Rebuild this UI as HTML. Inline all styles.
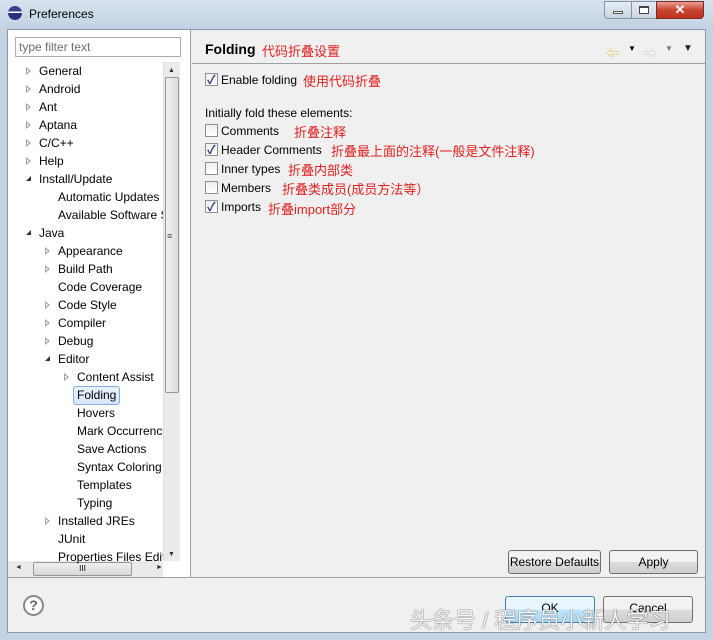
<!DOCTYPE html>
<html><head><meta charset="utf-8"><style>
*{margin:0;padding:0;box-sizing:border-box}
body{width:713px;height:640px;overflow:hidden;background:#c4d3e3;font-family:"Liberation Sans","Noto Sans CJK SC",sans-serif;font-size:12px;color:#000;position:relative}
.a{position:absolute;white-space:nowrap}
.red{color:#e02020;font-size:13px}
.cb{position:absolute;width:13px;height:13px;border:1px solid #8e8f8f;background:linear-gradient(#eee,#fff)}
.cb.c::after{content:"✓";position:absolute;left:1px;top:-3px;font-size:12px;color:#2a3d78;font-weight:bold}
.tri{position:absolute;width:0;height:0;border-top:4px solid transparent;border-bottom:4px solid transparent;border-left:5px solid #a0a0a0}
.tri::after{content:"";position:absolute;left:-4px;top:-2px;border-top:2px solid transparent;border-bottom:2px solid transparent;border-left:2.5px solid #fff}
.open{position:absolute;width:0;height:0;border-left:5px solid transparent;border-bottom:5px solid #333}
.btn{position:absolute;border:1px solid #707070;border-radius:3px;background:linear-gradient(#f2f2f2 50%,#dcdcdc 50%,#cfcfcf);text-align:center;font-size:12px}
</style></head><body>
<div class="a" style="left:0;top:0;width:713px;height:30px;background:linear-gradient(#d7e2ee,#c2d2e3)"></div>
<div class="a" style="left:8px;top:6px;width:14px;height:14px;border-radius:50%;background:linear-gradient(#3c3f8c 0 40%,#fff 40% 50%,#2c2f7a 50%)"></div>
<div class="a" style="left:29px;top:7px;font-size:12px">Preferences</div>
<div class="a" style="left:604px;top:1px;width:28px;height:18px;border:1px solid #8393a6;border-radius:0 0 0 4px;background:linear-gradient(#e6edf5,#c9d5e2)"><div class="a" style="left:8px;top:9px;width:10px;height:3px;border:1px solid #555;background:#fff"></div></div>
<div class="a" style="left:631px;top:1px;width:26px;height:18px;border:1px solid #8393a6;background:linear-gradient(#e6edf5,#c9d5e2)"><div class="a" style="left:7px;top:4px;width:10px;height:8px;border:1px solid #444;border-top-width:2px;background:#fff"></div></div>
<div class="a" style="left:656px;top:1px;width:48px;height:18px;border:1px solid #7a2a20;border-radius:0 0 4px 0;background:linear-gradient(#e8a090,#c94532 50%,#c0311c);color:#fff;text-align:center;font-weight:bold;font-size:13px;line-height:16px">✕</div>
<div class="a" style="left:7px;top:29px;width:699px;height:604px;background:#f0f0f0;border:1px solid #8a9aab"></div>
<div class="a" style="left:8px;top:30px;width:183px;height:548px;background:#fff;border-right:1px solid #a0a0a0"></div>
<div class="a" style="left:15px;top:37px;width:166px;height:20px;border:1px solid #a5acb5;background:#fff;color:#6d6d6d;padding:2px 3px">type filter text</div>
<div class="a" style="left:192px;top:63px;width:513px;height:1px;background:#a0a0a0"></div>
<div class="a" style="left:8px;top:577px;width:697px;height:1px;background:#a0a0a0"></div>
<div class="a" style="left:163px;top:62px;width:17px;height:499px;background:#eaeaea;border-left:1px solid #e0e0e0"></div>
<div class="a" style="left:168px;top:67px;font-size:7px;color:#333">▲</div>
<div class="a" style="left:168px;top:551px;font-size:7px;color:#333">▼</div>
<div class="a" style="left:165px;top:77px;width:14px;height:316px;border:1px solid #969696;border-radius:2px;background:linear-gradient(90deg,#f0f0f0,#dcdcdc)"></div>
<div class="a" style="left:167px;top:231px;font-size:9px;color:#444">≡</div>
<div class="a" style="left:8px;top:561px;width:155px;height:16px;background:#eaeaea"></div>
<div class="a" style="left:15px;top:564px;font-size:7px;color:#333">◄</div>
<div class="a" style="left:156px;top:564px;font-size:7px;color:#333">►</div>
<div class="a" style="left:33px;top:562px;width:99px;height:14px;border:1px solid #969696;border-radius:2px;background:linear-gradient(#f0f0f0,#d8d8d8);text-align:center;font-size:8px;line-height:12px">III</div>
<div class="tri" style="left:26px;top:67px"></div><div class="a" style="left:39px;top:64px">General</div>
<div class="tri" style="left:26px;top:85px"></div><div class="a" style="left:39px;top:82px">Android</div>
<div class="tri" style="left:26px;top:103px"></div><div class="a" style="left:39px;top:100px">Ant</div>
<div class="tri" style="left:26px;top:121px"></div><div class="a" style="left:39px;top:118px">Aptana</div>
<div class="tri" style="left:26px;top:139px"></div><div class="a" style="left:39px;top:136px">C/C++</div>
<div class="tri" style="left:26px;top:157px"></div><div class="a" style="left:39px;top:154px">Help</div>
<div class="open" style="left:26px;top:176px"></div><div class="a" style="left:39px;top:172px">Install/Update</div>
<div class="a" style="left:58px;top:190px">Automatic Updates</div>
<div class="a" style="left:58px;top:208px;width:105px;overflow:hidden">Available Software Sites</div>
<div class="open" style="left:26px;top:230px"></div><div class="a" style="left:39px;top:226px">Java</div>
<div class="tri" style="left:45px;top:247px"></div><div class="a" style="left:58px;top:244px">Appearance</div>
<div class="tri" style="left:45px;top:265px"></div><div class="a" style="left:58px;top:262px">Build Path</div>
<div class="a" style="left:58px;top:280px">Code Coverage</div>
<div class="tri" style="left:45px;top:301px"></div><div class="a" style="left:58px;top:298px">Code Style</div>
<div class="tri" style="left:45px;top:319px"></div><div class="a" style="left:58px;top:316px">Compiler</div>
<div class="tri" style="left:45px;top:337px"></div><div class="a" style="left:58px;top:334px">Debug</div>
<div class="open" style="left:45px;top:356px"></div><div class="a" style="left:58px;top:352px">Editor</div>
<div class="tri" style="left:64px;top:373px"></div><div class="a" style="left:77px;top:370px">Content Assist</div>
<div class="a" style="left:73px;top:386px;width:47px;height:19px;border:1px solid #84acdd;border-radius:3px;background:linear-gradient(#eaf3fd,#d5e6fb)"></div>
<div class="a" style="left:77px;top:388px">Folding</div>
<div class="a" style="left:77px;top:406px">Hovers</div>
<div class="a" style="left:77px;top:424px;width:86px;overflow:hidden">Mark Occurrences</div>
<div class="a" style="left:77px;top:442px">Save Actions</div>
<div class="a" style="left:77px;top:460px">Syntax Coloring</div>
<div class="a" style="left:77px;top:478px">Templates</div>
<div class="a" style="left:77px;top:496px">Typing</div>
<div class="tri" style="left:45px;top:517px"></div><div class="a" style="left:58px;top:514px">Installed JREs</div>
<div class="a" style="left:58px;top:532px">JUnit</div>
<div class="a" style="left:58px;top:550px;width:105px;overflow:hidden">Properties Files Editor</div>
<div class="a" style="left:205px;top:41px;font-size:14px;font-weight:bold">Folding</div>
<div class="a red" style="left:262px;top:41px">代码折叠设置</div>
<div class="a" style="left:606px;top:43px;color:#e8b830;font-size:13px">⇦</div>
<div class="a" style="left:628px;top:44px;font-size:8px">▼</div>
<div class="a" style="left:644px;top:43px;color:#ccc;font-size:13px">⇨</div>
<div class="a" style="left:665px;top:44px;font-size:8px;color:#777">▼</div>
<div class="a" style="left:683px;top:43px;font-size:10px;color:#223">▼</div>
<div class="cb c" style="left:205px;top:73px"></div><div class="a" style="left:221px;top:73px">Enable folding</div><div class="a red" style="left:303px;top:71px">使用代码折叠</div>
<div class="a" style="left:205px;top:106px">Initially fold these elements:</div>
<div class="cb" style="left:205px;top:124px"></div><div class="a" style="left:221px;top:124px">Comments</div><div class="a red" style="left:294px;top:122px">折叠注释</div>
<div class="cb c" style="left:205px;top:143px"></div><div class="a" style="left:221px;top:143px">Header Comments</div><div class="a red" style="left:331px;top:141px;width:205px;overflow:hidden">折叠最上面的注释(一般是文件注释)</div>
<div class="cb" style="left:205px;top:162px"></div><div class="a" style="left:221px;top:162px">Inner types</div><div class="a red" style="left:288px;top:160px">折叠内部类</div>
<div class="cb" style="left:205px;top:181px"></div><div class="a" style="left:221px;top:181px">Members</div><div class="a red" style="left:282px;top:179px">折叠类成员(成员方法等）</div>
<div class="cb c" style="left:205px;top:200px"></div><div class="a" style="left:221px;top:200px">Imports</div><div class="a red" style="left:268px;top:199px">折叠import部分</div>
<div class="btn" style="left:508px;top:550px;width:93px;height:24px;line-height:22px">Restore Defaults</div>
<div class="btn" style="left:609px;top:550px;width:89px;height:24px;line-height:22px">Apply</div>
<div class="a" style="left:23px;top:595px;width:21px;height:21px;border:2px solid #888;border-radius:50%;text-align:center;font-weight:bold;color:#666;font-size:14px;line-height:17px;background:#fafafa">?</div>
<div class="btn" style="left:505px;top:596px;width:90px;height:27px;line-height:22px;border-color:#3c7fb1;background:linear-gradient(#eaf6fd 50%,#bee6fd 50%,#a7d9f5)">OK</div>
<div class="btn" style="left:603px;top:596px;width:90px;height:27px;line-height:22px">Cancel</div>
<div class="a" style="left:410px;top:603px;font-size:22px;color:#f4f4f4;text-shadow:0 0 1px #555,0 0 1px #555">头条号 / 程序员小新人学习</div>
</body></html>
